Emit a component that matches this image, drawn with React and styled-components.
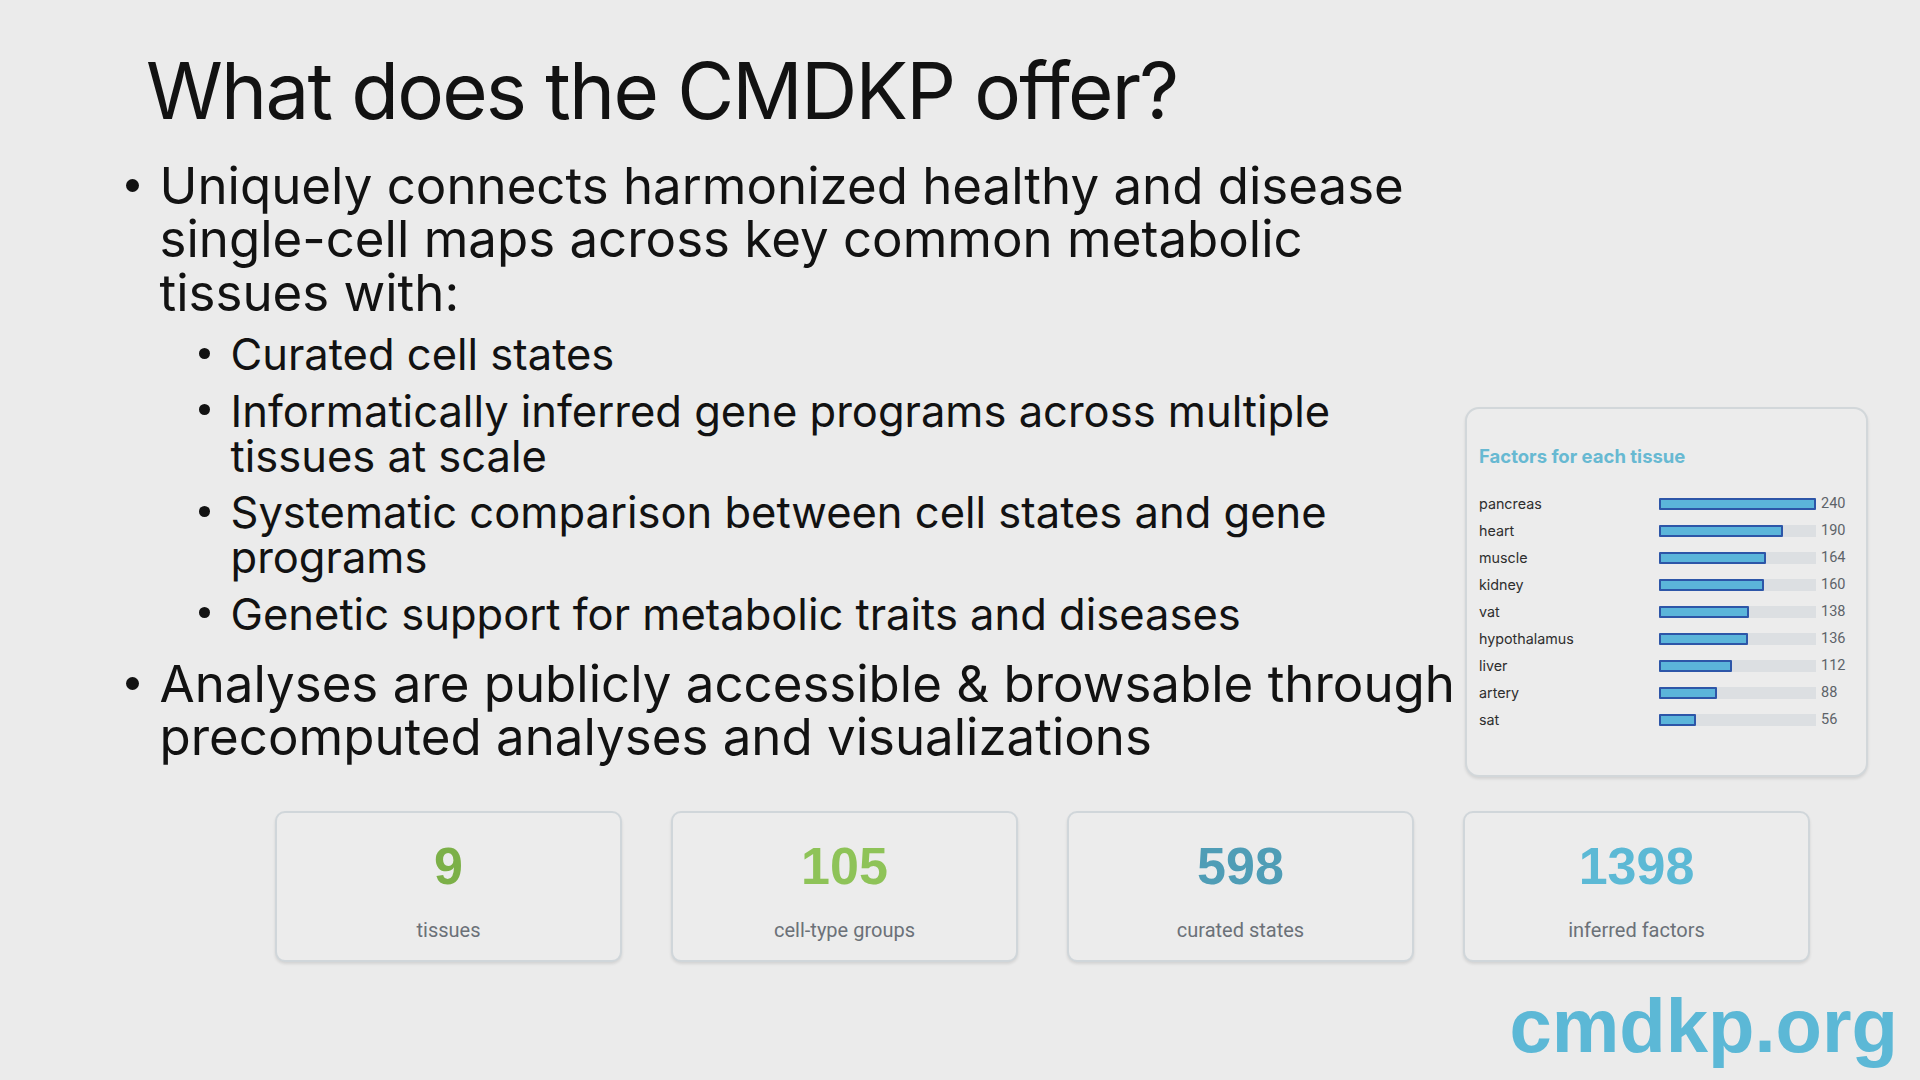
import React from "react";
import styled, { createGlobalStyle } from "styled-components";

const Global = createGlobalStyle`
  html, body {
    margin: 0;
    padding: 0;
    background: #ebebeb;
  }
  * {
    box-sizing: border-box;
  }
`;

const Slide = styled.div`
  width: 1920px;
  height: 1080px;
  overflow: hidden;
  background: #ebebeb;
  display: flex;
  flex-direction: column;
  font-family: Inter, "Noto Sans", sans-serif;
  color: #121212;
`;

const Title = styled.h1`
  margin: 0;
  padding: 44px 0 0 146px;
  font-size: 78px;
  font-weight: 400;
  letter-spacing: -1.8px;
  line-height: 93.6px;
`;

const Main = styled.div`
  display: flex;
  align-items: flex-start;
  margin-top: 21px;
  padding-left: 126px;
`;

const Bullets = styled.ul`
  flex: 0 0 1339px;
  margin: 0;
  padding: 0;
  list-style: none;
`;

const Item = styled.li`
  display: grid;
  grid-template-columns: 13px 1fr;
  column-gap: 20.5px;
  font-size: 51px;
  line-height: 53.5px;
  white-space: nowrap;

  & + & {
    margin-top: 20px;
  }
`;

const Dot = styled.span`
  width: ${(p) => p.$size}px;
  height: ${(p) => p.$size}px;
  margin-top: ${(p) => p.$top}px;
  border-radius: 50%;
  background: #121212;
`;

const SubList = styled.ul`
  margin: 13px 0 0 39px;
  padding: 0;
  list-style: none;
`;

const SubItem = styled.li`
  display: grid;
  grid-template-columns: 11px 1fr;
  column-gap: 21px;
  font-size: 43.5px;
  line-height: 45px;

  & + & {
    margin-top: 11.5px;
  }
`;

const ChartCard = styled.div`
  flex: 0 0 403px;
  height: 370px;
  margin-top: 248px;
  padding: 36.5px 12px 0 12px;
  border: 2px solid #d2d7da;
  border-radius: 14px;
  background: #ececec;
  box-shadow: 0 2px 3px rgba(0, 0, 0, 0.1);
`;

const ChartTitle = styled.div`
  font-size: 18.5px;
  font-weight: 700;
  line-height: 22px;
  color: #67b9d2;
`;

const ChartRows = styled.div`
  margin-top: 23px;
  display: flex;
  flex-direction: column;
`;

const ChartRow = styled.div`
  display: grid;
  grid-template-columns: 175px 157px auto;
  column-gap: 5px;
  align-items: center;
  height: 27px;
`;

const RowLabel = styled.span`
  font-size: 14.3px;
  line-height: 27px;
  color: #2e2e2e;
`;

const Track = styled.div`
  height: 12px;
  background: #dcdfe2;
`;

const Fill = styled.div`
  height: 100%;
  background: #5bb5da;
  border: 2px solid #2d56a8;
  border-radius: 1px;
`;

const RowValue = styled.span`
  font-family: Roboto, "Liberation Sans", sans-serif;
  font-size: 14.5px;
  line-height: 27px;
  color: #5d6369;
`;

const StatsRow = styled.div`
  display: flex;
  gap: 49px;
  margin-top: 34px;
  padding-left: 275px;
`;

const StatCard = styled.div`
  width: 347px;
  height: 151px;
  padding-top: 27px;
  border: 2px solid #d0d6da;
  border-radius: 10px;
  background: #ececec;
  box-shadow: 0 2px 3px rgba(0, 0, 0, 0.1);
  display: flex;
  flex-direction: column;
  align-items: center;
`;

const StatNumber = styled.div`
  font-family: "Liberation Sans", Arial, sans-serif;
  font-weight: 700;
  font-size: 52px;
  line-height: 52px;
  color: ${(p) => p.$color};
`;

const StatLabel = styled.div`
  margin-top: 26px;
  font-family: Roboto, "Liberation Sans", sans-serif;
  font-size: 20px;
  line-height: 24px;
  color: #6b7178;
`;

const Footer = styled.div`
  display: flex;
  justify-content: flex-end;
  margin-top: 26px;
  padding-right: 22px;
`;

const SiteLink = styled.span`
  font-family: "Liberation Sans", Arial, sans-serif;
  font-weight: 700;
  font-size: 76px;
  line-height: 76px;
  color: #5cb8d6;
`;

const factors = [
  ["pancreas", 240],
  ["heart", 190],
  ["muscle", 164],
  ["kidney", 160],
  ["vat", 138],
  ["hypothalamus", 136],
  ["liver", 112],
  ["artery", 88],
  ["sat", 56],
];

const stats = [
  ["9", "tissues", "#7cb048"],
  ["105", "cell-type groups", "#8ec358"],
  ["598", "curated states", "#4f9db6"],
  ["1398", "inferred factors", "#5cb9d5"],
];

const subPoints = [
  ["Curated cell states"],
  ["Informatically inferred gene programs across multiple", "tissues at scale"],
  ["Systematic comparison between cell states and gene", "programs"],
  ["Genetic support for metabolic traits and diseases"],
];

const Lines = ({ lines }) =>
  lines.map((l, i) => (
    <React.Fragment key={l}>
      {i > 0 && <br />}
      {l}
    </React.Fragment>
  ));

export default function App() {
  const max = 240;
  return (
    <Slide>
      <Global />
      <Title>What does the CMDKP offer?</Title>
      <Main>
        <Bullets>
          <Item>
            <Dot $size={13} $top={20} />
            <div>
              <Lines
                lines={[
                  "Uniquely connects harmonized healthy and disease",
                  "single-cell maps across key common metabolic",
                  "tissues with:",
                ]}
              />
              <SubList>
                {subPoints.map((p) => (
                  <SubItem key={p[0]}>
                    <Dot $size={11} $top={15.5} />
                    <div>
                      <Lines lines={p} />
                    </div>
                  </SubItem>
                ))}
              </SubList>
            </div>
          </Item>
          <Item>
            <Dot $size={13} $top={20} />
            <div>
              <Lines
                lines={[
                  "Analyses are publicly accessible & browsable through",
                  "precomputed analyses and visualizations",
                ]}
              />
            </div>
          </Item>
        </Bullets>
        <ChartCard>
          <ChartTitle>Factors for each tissue</ChartTitle>
          <ChartRows>
            {factors.map(([name, n]) => (
              <ChartRow key={name}>
                <RowLabel>{name}</RowLabel>
                <Track>
                  <Fill style={{ width: `${(n / max) * 100}%` }} />
                </Track>
                <RowValue>{n}</RowValue>
              </ChartRow>
            ))}
          </ChartRows>
        </ChartCard>
      </Main>
      <StatsRow>
        {stats.map(([num, label, color]) => (
          <StatCard key={label}>
            <StatNumber $color={color}>{num}</StatNumber>
            <StatLabel>{label}</StatLabel>
          </StatCard>
        ))}
      </StatsRow>
      <Footer>
        <SiteLink>cmdkp.org</SiteLink>
      </Footer>
    </Slide>
  );
}
